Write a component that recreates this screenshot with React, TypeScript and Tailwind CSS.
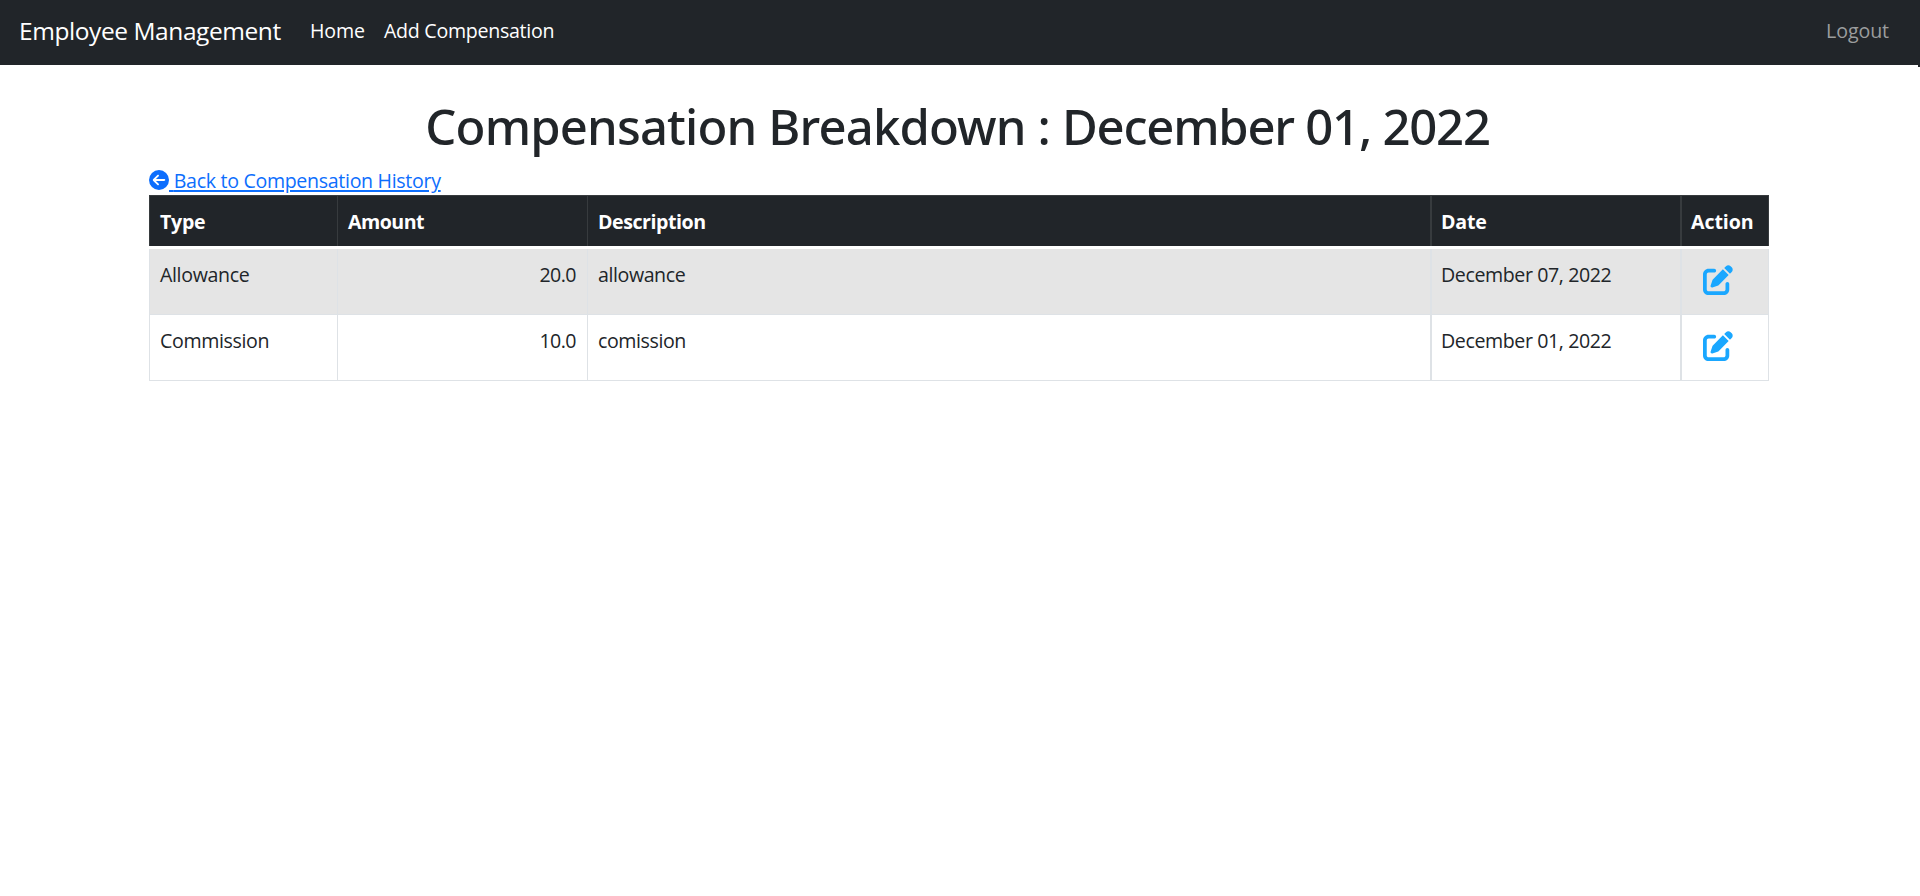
import { FaCircleArrowLeft, FaPenToSquare } from "react-icons/fa6";

const columns = "grid grid-cols-[188px_250px_845px_250px_87px]";

interface Entry {
  type: string;
  amount: string;
  description: string;
  date: string;
}

const entries: Entry[] = [
  { type: "Allowance", amount: "20.0", description: "allowance", date: "December 07, 2022" },
  { type: "Commission", amount: "10.0", description: "comission", date: "December 01, 2022" },
];

function Navbar() {
  return (
    <nav className="flex h-[65px] items-start bg-[#212529] leading-[30px] text-white">
      <a className="ml-[19px] mt-[12px] w-[291px] text-[24.5px] leading-[38px] tracking-[-0.43px] whitespace-nowrap">
        Employee Management
      </a>
      <a className="mt-[16px] w-[74px] tracking-[-0.12px]">Home</a>
      <a className="mt-[16px] tracking-[-0.278px]">Add Compensation</a>
      <a className="mt-[16px] mr-[31px] ml-auto tracking-[-0.09px] text-[#9b9d9e]">Logout</a>
    </nav>
  );
}

function HeaderRow() {
  return (
    <div className={`${columns} h-[51px] border-t border-[#373b3e] bg-[#212529] font-bold text-white`}>
      <div className="border-l border-[#373b3e] px-[10px] pt-[11px] tracking-[-0.297px]">Type</div>
      <div className="border-l border-[#373b3e] px-[10px] pt-[11px] tracking-[-0.529px]">Amount</div>
      <div className="border-l border-[#373b3e] px-[10px] pt-[11px] tracking-[-0.45px]">Description</div>
      <div className="-ml-[2px] border-l-2 border-[#373b3e] px-[9px] pt-[11px] tracking-[-0.2px]">Date</div>
      <div className="-ml-[2px] border-r border-l-2 border-[#373b3e] px-[9px] pt-[11px] tracking-[-0.1px]">
        Action
      </div>
    </div>
  );
}

function BodyRow({ entry, striped }: { entry: Entry; striped: boolean }) {
  return (
    <div className={`${columns} h-[66px] border-b border-[#dee2e6] ${striped ? "bg-[#e5e5e5]" : "bg-white"}`}>
      <div className="border-l border-[#dee2e6] pt-[11px] pl-[10px] tracking-[-0.36px]">{entry.type}</div>
      <div className="border-l border-[#dee2e6] pt-[11px] pr-[11px] text-right tracking-[-0.55px]">{entry.amount}</div>
      <div className="border-l border-[#dee2e6] pt-[11px] pl-[10px] tracking-[-0.42px]">{entry.description}</div>
      <div className="-ml-[2px] border-l-2 border-[#dee2e6] pt-[11px] pl-[9px] tracking-[-0.4px]">{entry.date}</div>
      <div className="-ml-[2px] border-r border-l-2 border-[#dee2e6] pt-[16px] pl-[21px]">
        <FaPenToSquare className="h-[30px] w-[30px] text-[#1aa7ff]" />
      </div>
    </div>
  );
}

export default function App() {
  return (
    <div className="relative h-[896px] overflow-hidden bg-white font-['Open_Sans',sans-serif] text-[19.6px] leading-[30px] text-[#212529]">
      <Navbar />
      <div className="absolute top-[65px] right-0 h-[2px] w-[2px] bg-[#212529]" />
      <main className="mx-auto mt-[31px] w-[1620px] -translate-x-px">
        <h1 className="pr-[3px] text-center font-['Noto_Sans',sans-serif] text-[49px] leading-[60px] font-medium tracking-[-0.84px] whitespace-nowrap">
          Compensation Breakdown : <span className="tracking-[-1.24px]">December 01, 2022</span>
        </h1>
        <a className="mt-[9px] flex h-[30px] text-[#0d6efd]">
          <FaCircleArrowLeft className="mt-[5px] h-5 w-5" />
          <span className="mt-px tracking-[-0.32px] whitespace-pre underline decoration-[2px] underline-offset-[2px]">
            {" "}Back to Compensation History
          </span>
        </a>
        <section>
          <HeaderRow />
          <div className="h-[3px] bg-white" />
          {entries.map((entry, i) => (
            <BodyRow key={entry.type} entry={entry} striped={i % 2 === 0} />
          ))}
        </section>
      </main>
    </div>
  );
}
